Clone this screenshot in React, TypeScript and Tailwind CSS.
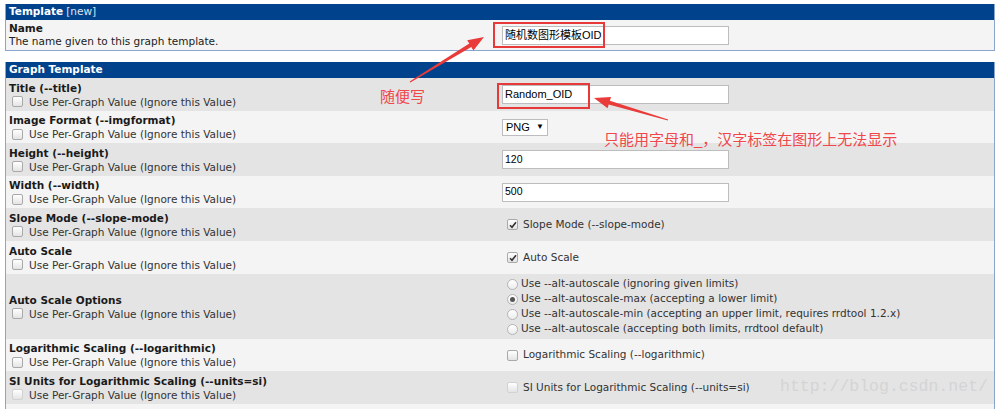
import type { ReactNode } from 'react';

const sans = 'font-["DejaVu_Sans",Verdana,sans-serif]';
const arial = 'font-["Liberation_Sans","Noto_Sans_CJK_SC",Arial,sans-serif]';

function CheckBox({ checked = false, faded = false }: { checked?: boolean; faded?: boolean }) {
  return (
    <span
      className={`inline-flex items-center justify-center w-[11px] h-[11px] rounded-[2px] border bg-linear-to-b from-white to-[#e4e4e4] ${
        faded ? 'border-[#d2d2d2]' : 'border-[#a9a9a9]'
      }`}
    >
      {checked && (
        <svg width="8" height="8" viewBox="0 0 8 8">
          <path d="M1 4.2 L3 6.3 L7 1.2" fill="none" stroke="#333" strokeWidth="1.6" />
        </svg>
      )}
    </span>
  );
}

function Radio({ on = false }: { on?: boolean }) {
  return (
    <span className="inline-flex items-center justify-center w-[11px] h-[11px] rounded-full border border-[#b4b4b4] bg-linear-to-b from-white to-[#ececec]">
      {on && <span className="w-[5px] h-[5px] rounded-full bg-[#555]" />}
    </span>
  );
}

function TextBox({ value, font = 'text-[10.5px]' }: { value: string; font?: string }) {
  return (
    <div
      className={`w-[227px] h-[19px] border border-[#bdbdbd] bg-white flex items-center px-[2px] text-black ${arial} ${font}`}
    >
      {value}
    </div>
  );
}

type RowProps = {
  label: string;
  right: ReactNode;
  bg: string;
  h?: string;
  faded?: boolean;
};

function Row({ label, right, bg, h = 'h-[33px]', faded = false }: RowProps) {
  return (
    <div className={`grid grid-cols-[496px_1fr] ${h} ${bg}`}>
      <div className="flex flex-col justify-center pl-[3px] leading-[14px]">
        <div className="font-bold text-[#1a1a1a]">{label}</div>
        <div className="flex items-center gap-[6px] pl-[3px] text-[#333]">
          <CheckBox faded={faded} />
          <span>Use Per-Graph Value (Ignore this Value)</span>
        </div>
      </div>
      <div className="flex items-center">{right}</div>
    </div>
  );
}

function CheckLabel({ text, checked = false, faded = false }: { text: string; checked?: boolean; faded?: boolean }) {
  return (
    <div className="flex items-center gap-[5px] pl-[5px] text-[#333]">
      <CheckBox checked={checked} faded={faded} />
      <span>{text}</span>
    </div>
  );
}

export default function App() {
  const radios = [
    'Use --alt-autoscale (ignoring given limits)',
    'Use --alt-autoscale-max (accepting a lower limit)',
    'Use --alt-autoscale-min (accepting an upper limit, requires rrdtool 1.2.x)',
    'Use --alt-autoscale (accepting both limits, rrdtool default)',
  ];

  return (
    <div className={`relative w-[1000px] h-[409px] bg-white overflow-hidden text-[10.5px] ${sans}`}>
      <div className="pt-[4px] px-[5px]">
        {/* template name */}
        <div className="border-x border-b border-[#8aa6cf]">
          <div className="h-[16px] bg-[#00438c] text-white flex items-center pl-[3px]">
            <span className="font-bold">Template</span>
            <span className="ml-[3px] text-[#dde6f3]">[new]</span>
          </div>
          <div className="grid grid-cols-[496px_1fr] h-[30px] bg-[#f4f4f4]">
            <div className="flex flex-col justify-center pl-[3px] leading-[13px]">
              <div className="font-bold text-[#1a1a1a]">Name</div>
              <div className="text-[#222]">The name given to this graph template.</div>
            </div>
            <div className="flex items-center">
              <TextBox value="随机数图形模板OID" font="text-[11px]" />
            </div>
          </div>
        </div>

        {/* graph template */}
        <div className="mt-[11px] border-x border-[#8aa6cf]">
          <div className="h-[16px] bg-[#00438c] text-white flex items-center pl-[3px] font-bold">
            Graph Template
          </div>
          <Row label="Title (--title)" bg="bg-[#e4e4e4]" right={<TextBox value="Random_OID" font="text-[11px]" />} />
          <Row
            label="Image Format (--imgformat)"
            bg="bg-[#f4f4f4]"
            h="h-[32px]"
            right={
              <div className={`w-[46px] h-[17px] border border-[#bdbdbd] bg-white flex items-center justify-between px-[3px] text-[11px] text-black ${arial}`}>
                <span>PNG</span>
                <span className="text-[8px]">▼</span>
              </div>
            }
          />
          <Row label="Height (--height)" bg="bg-[#e4e4e4]" right={<TextBox value="120" />} />
          <Row label="Width (--width)" bg="bg-[#f4f4f4]" h="h-[32px]" right={<TextBox value="500" />} />
          <Row
            label="Slope Mode (--slope-mode)"
            bg="bg-[#e4e4e4]"
            right={<CheckLabel text="Slope Mode (--slope-mode)" checked />}
          />
          <Row label="Auto Scale" bg="bg-[#f4f4f4]" right={<CheckLabel text="Auto Scale" checked />} />
          <Row
            label="Auto Scale Options"
            bg="bg-[#e4e4e4]"
            h="h-[65px]"
            right={
              <div className="flex flex-col pl-[5px] text-[#333]">
                {radios.map((r, i) => (
                  <div key={i} className="flex items-center gap-[3px] h-[15px]">
                    <Radio on={i === 1} />
                    <span>{r}</span>
                  </div>
                ))}
              </div>
            }
          />
          <Row
            label="Logarithmic Scaling (--logarithmic)"
            bg="bg-[#f4f4f4]"
            h="h-[32px]"
            right={<CheckLabel text="Logarithmic Scaling (--logarithmic)" />}
          />
          <Row
            label="SI Units for Logarithmic Scaling (--units=si)"
            bg="bg-[#e4e4e4]"
            faded
            right={<CheckLabel text="SI Units for Logarithmic Scaling (--units=si)" faded />}
          />
          <div className="h-[6px] bg-[#f4f4f4]" />
        </div>
      </div>

      {/* annotations */}
      <div className="absolute left-[493px] top-[22px] w-[112px] h-[26px] border-2 border-[#e8393a] pointer-events-none" />
      <div className="absolute left-[497px] top-[83px] w-[93px] h-[26px] border-2 border-[#e8393a] pointer-events-none" />
      <svg className="absolute inset-0 pointer-events-none" width="1000" height="409" viewBox="0 0 1000 409">
        <polygon
          points="410.3,82.4 471.3,47.0 473.4,50.4 484,37 467.2,40.2 469.3,43.6 409.7,81.6"
          fill="#ea3b3b"
        />
        <polygon
          points="668.1,119.5 609.9,100.7 611.0,96.9 594,98 607.6,108.3 608.7,104.5 667.9,120.5"
          fill="#ea3b3b"
        />
      </svg>
      <div className={`absolute left-[380px] top-[88px] text-[15px] leading-[18px] text-[#f0474a] ${arial}`}>随便写</div>
      <div className={`absolute left-[604px] top-[131px] text-[15px] leading-[18px] text-[#f0474a] ${arial}`}>
        只能用字母和_，汉字标签在图形上无法显示
      </div>
      <div className='absolute left-[780px] top-[376px] text-[16.5px] leading-[22px] text-[#d4d4d4] font-["Liberation_Mono",monospace]'>
        http://blog.csdn.net/
      </div>
    </div>
  );
}
